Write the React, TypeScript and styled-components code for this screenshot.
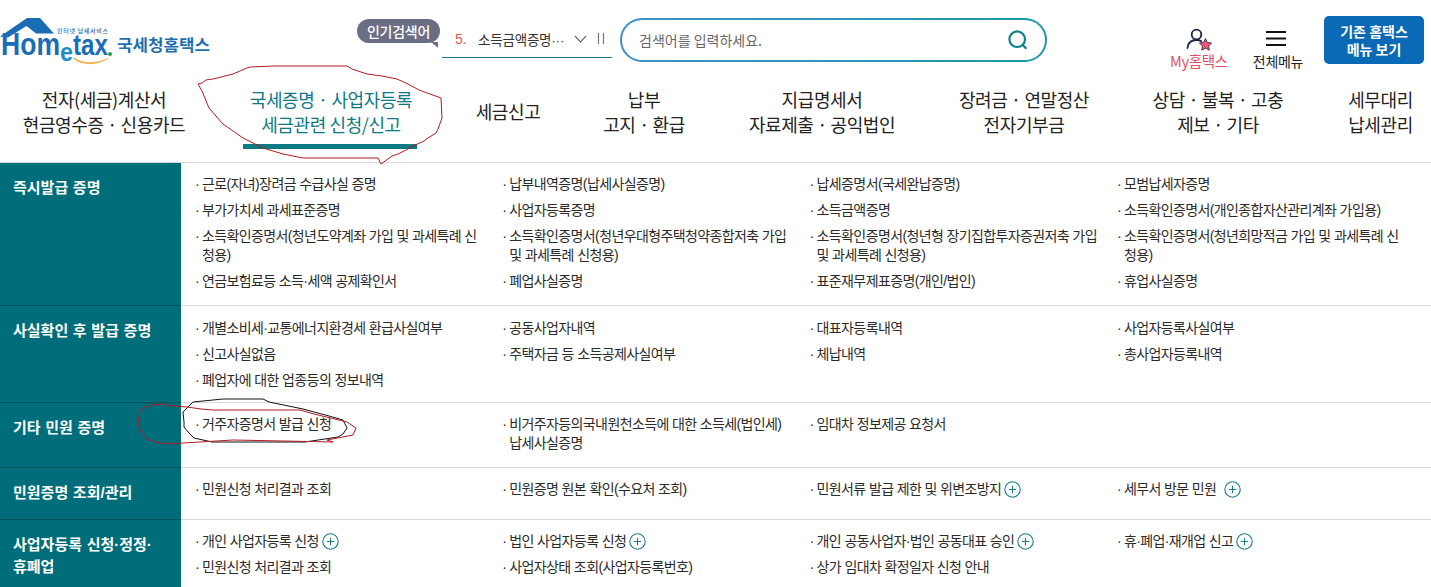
import React from "react";
import styled, { createGlobalStyle } from "styled-components";

const Global = createGlobalStyle`
  html, body { margin: 0; padding: 0; background: #fff; }
  body { font-family: "Noto Sans CJK KR", "Noto Sans", sans-serif; color: #222; overflow: hidden; }
  #root { width: 1431px; height: 587px; overflow: hidden; }
`;

const Page = styled.div`
  position: relative;
  width: 1431px;
  height: 587px;
  overflow: hidden;
`;

const Header = styled.header`
  display: flex;
  align-items: flex-start;
  height: 80px;
`;

const LogoSvg = styled.svg`
  width: 215px;
  height: 72px;
  flex: none;
`;

const Bubble = styled.div`
  position: relative;
  flex: none;
  margin: 19px 0 0 142px;
  width: 83px;
  height: 24px;
  border-radius: 12px;
  background: #6b6d85;
  color: #fff;
  font-size: 14px;
  font-weight: 500;
  letter-spacing: -0.25px;
  line-height: 24px;
  text-align: center;
  &::after {
    content: "";
    position: absolute;
    right: 2px;
    bottom: -5px;
    border-top: 6px solid #6b6d85;
    border-left: 7px solid transparent;
  }
`;

const Rolling = styled.div`
  flex: none;
  display: flex;
  align-items: center;
  margin: 20px 0 0 2px;
  padding-left: 13px;
  box-sizing: border-box;
  width: 170px;
  height: 38px;
  border-bottom: 1px solid #1b7590;
  font-family: "Liberation Sans", "Noto Sans CJK KR", sans-serif;
  font-size: 13.5px;
  letter-spacing: -0.2px;
  color: #333;
`;

const RankNo = styled.span`
  color: #e0574b;
  width: 23px;
  font-size: 14px;
`;

const RollingText = styled.span`
  width: 90px;
  white-space: nowrap;
`;

const RollingIcon = styled.svg`
  flex: none;
  margin-left: ${(p: { $gap: number }) => p.$gap}px;
`;

const SearchBox = styled.div`
  flex: none;
  display: flex;
  align-items: center;
  justify-content: space-between;
  box-sizing: border-box;
  width: 427px;
  height: 44px;
  margin: 18px 0 0 8px;
  padding: 0 16px 0 17px;
  border-radius: 22px;
  border: 2px solid transparent;
  background: linear-gradient(#fff, #fff) padding-box, linear-gradient(90deg, #3d8fc9, #1b9aa8) border-box;
  font-size: 14px;
  color: #666;
`;

const Utility = styled.div`
  flex: none;
  display: flex;
  flex-direction: column;
  align-items: center;
  width: ${(p: { $w: number; $ml: number; $color: string; $fs: number }) => p.$w}px;
  margin: 28px 0 0 ${(p) => p.$ml}px;
  height: 44px;
  font-size: ${(p) => p.$fs}px;
  letter-spacing: -0.3px;
  color: ${(p) => p.$color};
`;

const UtilityIcon = styled.svg`
  flex: none;
  display: block;
  margin-right: ${(p: { $mr?: number }) => p.$mr ?? 0}px;
`;

const UtilityLabel = styled.span`
  line-height: 18px;
  margin-top: 1px;
  white-space: nowrap;
`;

const OldMenuButton = styled.button`
  flex: none;
  width: 100px;
  height: 48px;
  margin: 16px 0 0 19px;
  padding: 0;
  border: 0;
  border-radius: 5px;
  background: #0a6ab5;
  color: #fff;
  font-family: inherit;
  font-size: 14px;
  font-weight: 700;
  line-height: 18px;
`;

const Nav = styled.nav`
  display: flex;
  height: 83px;
  box-sizing: border-box;
  border-bottom: 1px solid #d9d9d9;
`;

const NavItem = styled.div<{ $w: number; $active?: boolean; $pl?: number }>`
  position: relative;
  flex: none;
  box-sizing: border-box;
  width: ${(p) => p.$w}px;
  padding: 7px 0 0 ${(p) => p.$pl ?? 0}px;
  text-align: center;
  font-size: 18px;
  line-height: 25px;
  letter-spacing: -0.4px;
  color: ${(p) => (p.$active ? "#0b7a85" : "#222")};
  white-space: nowrap;
`;

const NavSingle = styled.span`
  display: block;
  padding-top: 12px;
`;

const NavBar = styled.span`
  position: absolute;
  left: 35px;
  bottom: 13px;
  width: 174px;
  height: 5px;
  background: #0b7a85;
`;

const Row = styled.section<{ $h: number }>`
  display: flex;
  box-sizing: border-box;
  height: ${(p) => p.$h}px;
  border-bottom: 1px solid #d9d9d9;
`;

const RowTitle = styled.h3`
  flex: none;
  box-sizing: border-box;
  width: 181px;
  height: calc(100% + 1px);
  margin: 0;
  padding: 14px 13px 0;
  background: #006d7a;
  border-bottom: 1px solid #00525c;
  color: #fff;
  font-family: "Liberation Sans", "Noto Sans CJK KR", sans-serif;
  font-size: 15px;
  font-weight: 700;
  line-height: 22px;
  word-spacing: 0.5px;
`;

const Items = styled.ul<{ $top: number }>`
  flex: 1;
  display: grid;
  grid-template-columns: repeat(4, 307.3px);
  grid-auto-rows: max-content;
  row-gap: 7px;
  margin: 0;
  padding: ${(p) => p.$top}px 0 0 15px;
  list-style: none;
`;

const Item = styled.li`
  box-sizing: border-box;
  padding: 0 21px 0 6px;
  text-indent: -6px;
  font-family: "Liberation Sans", "Noto Sans CJK KR", sans-serif;
  font-size: 14px;
  line-height: 19px;
  letter-spacing: -0.62px;
  color: #2b2b2b;
  &::before { content: "·"; display: inline-block; width: 6px; margin-left: -1px; margin-right: 1px; text-indent: 0; }
`;

const PlusIcon = styled.svg`
  display: inline-block;
  width: 17px;
  height: 17px;
  margin-left: ${(p: { $ml?: number }) => p.$ml ?? 3}px;
  vertical-align: -4px;
`;

const Annotations = styled.svg`
  position: absolute;
  inset: 0;
  width: 1431px;
  height: 587px;
  pointer-events: none;
`;

const Plus = ({ ml }: { ml?: number }) => (
  <PlusIcon $ml={ml} viewBox="0 0 17 17" fill="none" stroke="#1c7c8c">
    <circle cx="8.5" cy="8.5" r="7.7" strokeWidth="1.1" />
    <path d="M8.5 4.8v7.4M4.8 8.5h7.4" strokeWidth="1.1" />
  </PlusIcon>
);

type Cell = React.ReactNode;

const rows: { title: React.ReactNode; h: number; top: number; items: Cell[] }[] = [
  {
    title: "즉시발급 증명",
    h: 143,
    top: 12,
    items: [
      "근로(자녀)장려금 수급사실 증명", "납부내역증명(납세사실증명)", "납세증명서(국세완납증명)", "모범납세자증명",
      "부가가치세 과세표준증명", "사업자등록증명", "소득금액증명", "소득확인증명서(개인종합자산관리계좌 가입용)",
      "소득확인증명서(청년도약계좌 가입 및 과세특례 신청용)", "소득확인증명서(청년우대형주택청약종합저축 가입 및 과세특례 신청용)", "소득확인증명서(청년형 장기집합투자증권저축 가입 및 과세특례 신청용)", "소득확인증명서(청년희망적금 가입 및 과세특례 신청용)",
      "연금보험료등 소득·세액 공제확인서", "폐업사실증명", "표준재무제표증명(개인/법인)", "휴업사실증명",
    ],
  },
  {
    title: "사실확인 후 발급 증명",
    h: 97,
    top: 13,
    items: [
      "개별소비세·교통에너지환경세 환급사실여부", "공동사업자내역", "대표자등록내역", "사업자등록사실여부",
      "신고사실없음", "주택자금 등 소득공제사실여부", "체납내역", "총사업자등록내역",
      "폐업자에 대한 업종등의 정보내역",
    ],
  },
  {
    title: "기타 민원 증명",
    h: 65,
    top: 12,
    items: ["거주자증명서 발급 신청", "비거주자등의국내원천소득에 대한 소득세(법인세) 납세사실증명", "임대차 정보제공 요청서"],
  },
  {
    title: "민원증명 조회/관리",
    h: 52,
    top: 12,
    items: [
      "민원신청 처리결과 조회", "민원증명 원본 확인(수요처 조회)",
      <>민원서류 발급 제한 및 위변조방지<Plus /></>,
      <>세무서 방문 민원<Plus ml={8} /></>,
    ],
  },
  {
    title: <>사업자등록 신청·정정·<br />휴폐업</>,
    h: 70,
    top: 12,
    items: [
      <>개인 사업자등록 신청<Plus /></>, <>법인 사업자등록 신청<Plus /></>,
      <>개인 공동사업자·법인 공동대표 승인<Plus /></>, <>휴·폐업·재개업 신고<Plus /></>,
      "민원신청 처리결과 조회", "사업자상태 조회(사업자등록번호)", "상가 임대차 확정일자 신청 안내",
    ],
  },
];

const Logo = () => (
  <LogoSvg viewBox="0 0 215 72">
    <path d="M0 36.5 27 18h13l14 15.500H36L26.500 26 8 37.500Z" fill="#1a6db5" />
    <text x="1" y="55" fontFamily="Liberation Sans, sans-serif" fontWeight="700" fontSize="31" fill="#1a6db5" textLength="59" lengthAdjust="spacingAndGlyphs">Hom</text>
    <text x="60" y="61" fontFamily="Liberation Sans, sans-serif" fontWeight="700" fontSize="25" fill="#1d8ec4" textLength="13" lengthAdjust="spacingAndGlyphs">e</text>
    <text x="73" y="55" fontFamily="Liberation Sans, sans-serif" fontWeight="700" fontSize="29" fill="#1a6db5" textLength="35" lengthAdjust="spacingAndGlyphs">tax</text>
    <circle cx="110" cy="54" r="2" fill="#2f9e44" />
    <path d="M73 58c8 7 22 8 35 .5-10 5-25 6-33 0Z" fill="#f0a32f" stroke="#f0a32f" strokeWidth=".6" />
    <text x="57" y="33" fontFamily="Noto Sans CJK KR, sans-serif" fontWeight="500" fontSize="6" fill="#1b6fb5" textLength="51">인터넷 납세서비스</text>
    <text x="117" y="51" fontFamily="Noto Sans CJK KR, sans-serif" fontWeight="700" fontSize="15.5" fill="#1f6fae" textLength="93" lengthAdjust="spacingAndGlyphs">국세청홈택스</text>
  </LogoSvg>
);

export default function App() {
  return (
    <Page>
      <Global />
      <Header>
        <Logo />
        <Bubble>인기검색어</Bubble>
        <Rolling>
          <RankNo>5.</RankNo>
          <RollingText>소득금액증명···</RollingText>
          <RollingIcon $gap={6} width="13" height="8" viewBox="0 0 13 8" fill="none" stroke="#444" strokeWidth="1.1">
            <path d="M1 1l5.500 6L12 1" />
          </RollingIcon>
          <RollingIcon $gap={10} width="8" height="11" viewBox="0 0 8 11" fill="none" stroke="#777" strokeWidth="1.2">
            <path d="M1.500 0v11M6.500 0v11" />
          </RollingIcon>
        </Rolling>
        <SearchBox>
          <span>검색어를 입력하세요.</span>
          <svg width="22" height="22" viewBox="0 0 22 22" fill="none" stroke="#0f7f8c" strokeWidth="2.2">
            <circle cx="10.2" cy="10.2" r="7.8" />
            <path d="M15.8 16l3.600 3.800" />
          </svg>
        </SearchBox>
        <Utility $w={64} $ml={120} $color="#e0506a" $fs={14.5}>
          <UtilityIcon width="28" height="23" viewBox="0 0 28 23" fill="none">
            <circle cx="11.5" cy="6.5" r="4.8" stroke="#1c2340" strokeWidth="1.8" />
            <path d="M2.500 20c.5-5 4-8 9-8 2 0 3.500.4 4.800 1.200" stroke="#1c2340" strokeWidth="1.8" strokeLinecap="round" />
            <path d="M20.500 10.500l1.900 3.900 4.200.6-3 3 .7 4.200-3.800-2-3.800 2 .7-4.200-3-3 4.200-.6Z" fill="#ef5675" stroke="#1c2340" strokeWidth=".8" />
          </UtilityIcon>
          <UtilityLabel>My홈택스</UtilityLabel>
        </Utility>
        <Utility $w={54} $ml={20} $color="#222" $fs={14}>
          <UtilityIcon $mr={4} width="20" height="23" viewBox="0 0 20 23" stroke="#111" strokeWidth="2">
            <path d="M0 4h20M0 10.500h20M0 17h20" />
          </UtilityIcon>
          <UtilityLabel>전체메뉴</UtilityLabel>
        </Utility>
        <OldMenuButton>기존 홈택스<br />메뉴 보기</OldMenuButton>
      </Header>
      <Nav>
        <NavItem $w={208}>전자(세금)계산서<br />현금영수증 · 신용카드</NavItem>
        <NavItem $w={246} $active>국세증명 · 사업자등록<br />세금관련 신청/신고<NavBar /></NavItem>
        <NavItem $w={108}><NavSingle>세금신고</NavSingle></NavItem>
        <NavItem $w={164}>납부<br />고지 · 환급</NavItem>
        <NavItem $w={192}>지급명세서<br />자료제출 · 공익법인</NavItem>
        <NavItem $w={212}>장려금 · 연말정산<br />전자기부금</NavItem>
        <NavItem $w={176}>상담 · 불복 · 고충<br />제보 · 기타</NavItem>
        <NavItem $w={125} $pl={24}>세무대리<br />납세관리</NavItem>
      </Nav>
      {rows.map((r, i) => (
        <Row key={i} $h={r.h}>
          <RowTitle>{r.title}</RowTitle>
          <Items $top={r.top}>
            {r.items.map((it, j) => <Item key={j}>{it}</Item>)}
          </Items>
        </Row>
      ))}
      <Annotations viewBox="0 0 1431 587" fill="none">
        <path d="M202 83l4-3 7-1 12-3 8-2 14-6 3-1 24-1 40 0 33 0 5 3 15 5 15 2 15 3 11 5 11 6 11 4 11 4 1 20-4 11-2 4-8 5-4 3-13 6-5 3-8 4-6 2-11 8-3-6-2 0-73 0-20-4-20-6-20-10-20-14-14-16-7-17-4-7Z" stroke="#b01c22" strokeWidth="1" />
        <path d="M184 422l-1-10 6-6 4-4 30-3 40 0 6 3 34 7 26 7 14 4 4 8-4 6-5 3-33 5-93 0-18-4-5-5-5-6Z" stroke="#111" strokeWidth="1" />
        <path d="M138 422l2-10 3-4 8-3 9-1 14 2 13 1 14 2 12 1 87 0 14 4 33 8 9 6-3 7-26 5 6 2-100-2-66 4-12-2-8-3-6-7-3-9Z" stroke="#b01c22" strokeWidth="1" />
      </Annotations>
    </Page>
  );
}
